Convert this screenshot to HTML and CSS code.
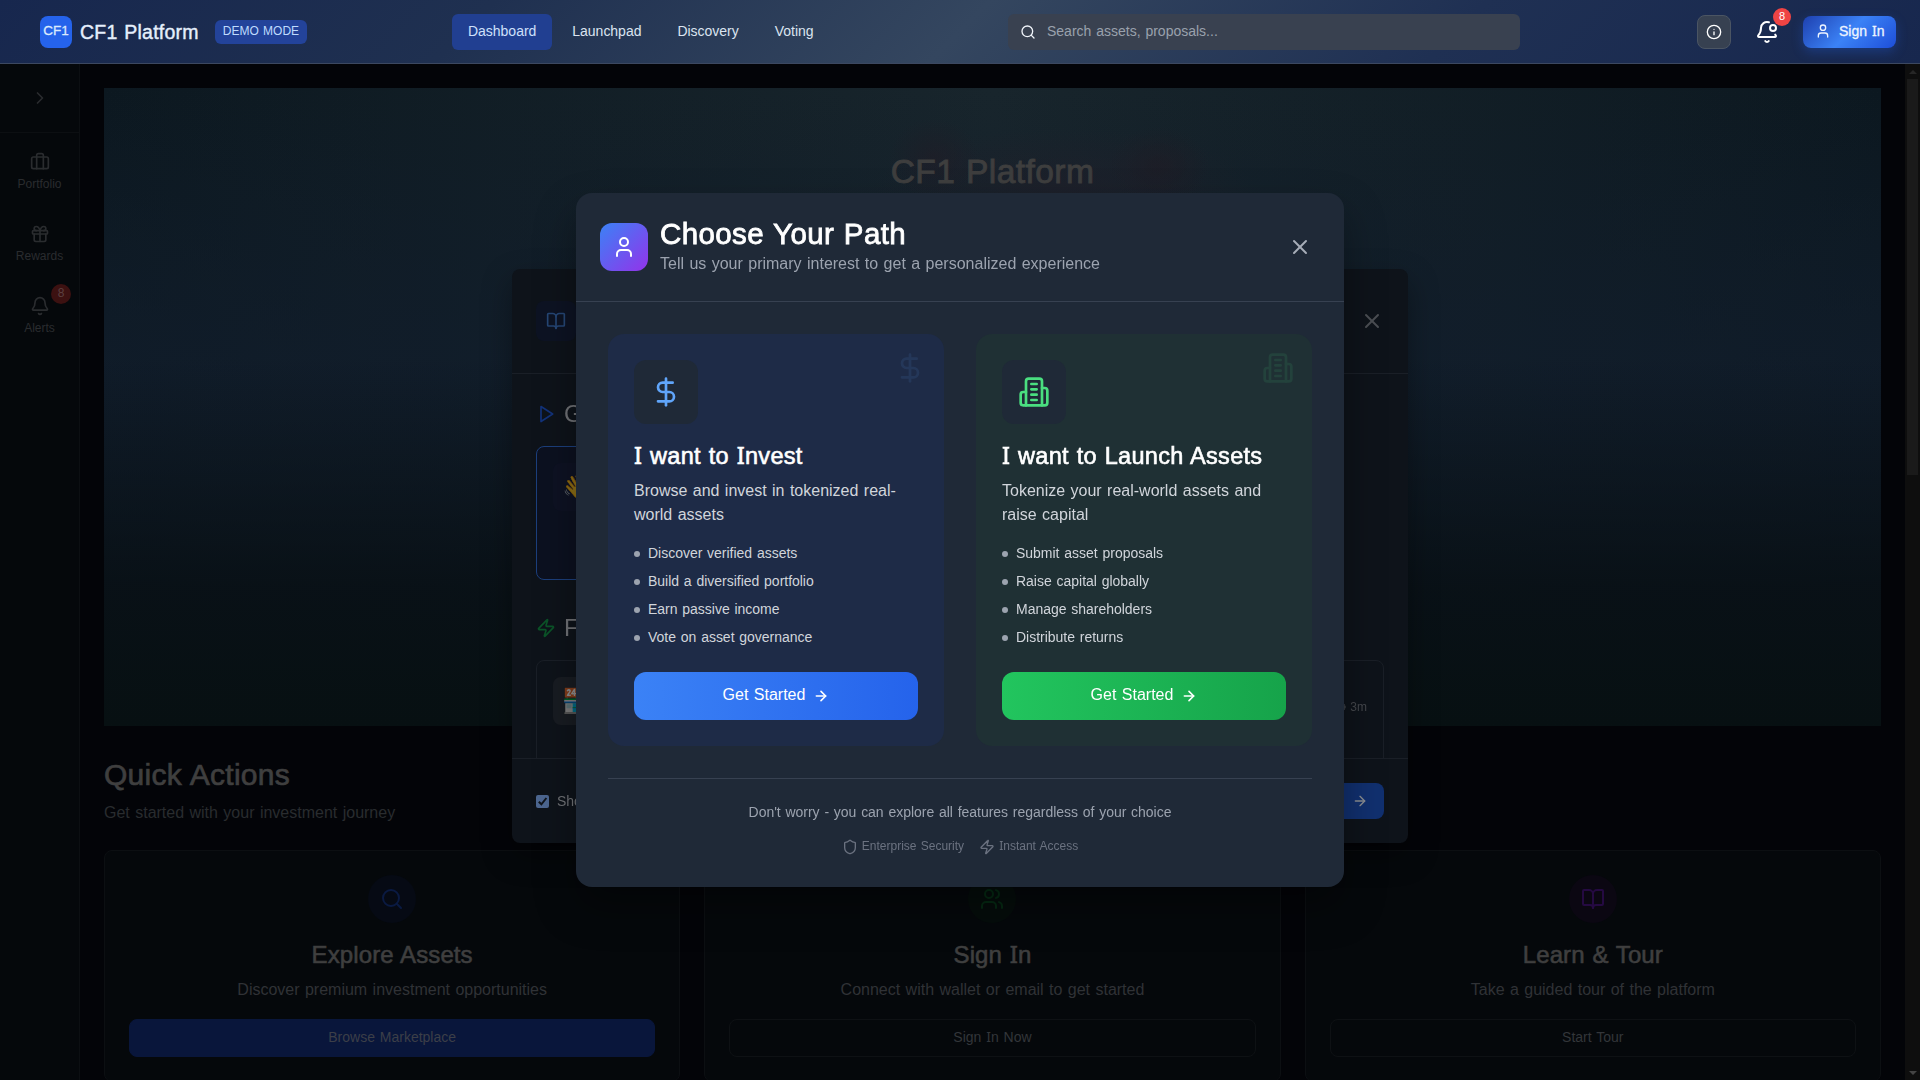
FILE: index.html
```html
<!DOCTYPE html>
<html lang="en">
<head>
<meta charset="utf-8">
<title>CF1 Platform</title>
<link rel="stylesheet" href="styles.css">
</head>
<body>
<svg class="defs" aria-hidden="true">
  <symbol id="search" viewBox="0 0 24 24"><circle cx="11" cy="11" r="8"/><path d="m21 21-4.3-4.3"/></symbol>
  <symbol id="info" viewBox="0 0 24 24"><circle cx="12" cy="12" r="10"/><path d="M12 16v-4"/><path d="M12 8h.01"/></symbol>
  <symbol id="bell-dot" viewBox="0 0 24 24"><path d="M10.268 21a2 2 0 0 0 3.464 0"/><path d="M13.916 2.314A6 6 0 0 0 6 8c0 4.499-1.411 5.956-2.74 7.327A1 1 0 0 0 4 17h16a1 1 0 0 0 .74-1.673 9 9 0 0 1-.585-.665"/><circle cx="18" cy="8" r="3"/></symbol>
  <symbol id="user" viewBox="0 0 24 24"><path d="M19 21v-2a4 4 0 0 0-4-4H9a4 4 0 0 0-4 4v2"/><circle cx="12" cy="7" r="4"/></symbol>
  <symbol id="users" viewBox="0 0 24 24"><path d="M16 21v-2a4 4 0 0 0-4-4H6a4 4 0 0 0-4 4v2"/><circle cx="9" cy="7" r="4"/><path d="M22 21v-2a4 4 0 0 0-3-3.87"/><path d="M16 3.13a4 4 0 0 1 0 7.75"/></symbol>
  <symbol id="chevron" viewBox="0 0 24 24"><path d="m9 18 6-6-6-6"/></symbol>
  <symbol id="luggage" viewBox="0 0 24 24"><path d="M16 20V4a2 2 0 0 0-2-2h-4a2 2 0 0 0-2 2v16"/><rect x="2" y="6" width="20" height="14" rx="2"/></symbol>
  <symbol id="gift" viewBox="0 0 24 24"><rect x="3" y="8" width="18" height="4" rx="1"/><path d="M12 8v13"/><path d="M19 12v7a2 2 0 0 1-2 2H7a2 2 0 0 1-2-2v-7"/><path d="M7.5 8a2.5 2.5 0 0 1 0-5A4.8 8 0 0 1 12 8a4.8 8 0 0 1 4.500-5 2.5 2.5 0 0 1 0 5"/></symbol>
  <symbol id="bell" viewBox="0 0 24 24"><path d="M10.268 21a2 2 0 0 0 3.464 0"/><path d="M3.262 15.326A1 1 0 0 0 4 17h16a1 1 0 0 0 .74-1.673C19.410 13.956 18 12.499 18 8A6 6 0 0 0 6 8c0 4.499-1.411 5.956-2.738 7.326"/></symbol>
  <symbol id="book" viewBox="0 0 24 24"><path d="M12 7v14"/><path d="M3 18a1 1 0 0 1-1-1V4a1 1 0 0 1 1-1h5a4 4 0 0 1 4 4 4 4 0 0 1 4-4h5a1 1 0 0 1 1 1v13a1 1 0 0 1-1 1h-6a3 3 0 0 0-3 3 3 3 0 0 0-3-3z"/></symbol>
  <symbol id="close" viewBox="0 0 24 24"><path d="M18 6 6 18"/><path d="m6 6 12 12"/></symbol>
  <symbol id="play" viewBox="0 0 24 24"><path d="m6 3 14 9-14 9z"/></symbol>
  <symbol id="zap" viewBox="0 0 24 24"><path d="M4 14a1 1 0 0 1-.78-1.630l9.900-10.200a.5.5 0 0 1 .86.460l-1.920 6.020A1 1 0 0 0 13 10h7a1 1 0 0 1 .780 1.630l-9.900 10.200a.5.5 0 0 1-.860-.460l1.920-6.020A1 1 0 0 0 11 14z"/></symbol>
  <symbol id="dollar" viewBox="0 0 24 24"><path d="M12 2v20"/><path d="M17 5H9.500a3.500 3.500 0 0 0 0 7h5a3.500 3.500 0 0 1 0 7H6"/></symbol>
  <symbol id="building" viewBox="0 0 24 24"><path d="M6 22V4a2 2 0 0 1 2-2h8a2 2 0 0 1 2 2v18Z"/><path d="M6 12H4a2 2 0 0 0-2 2v6a2 2 0 0 0 2 2h2"/><path d="M18 9h2a2 2 0 0 1 2 2v9a2 2 0 0 1-2 2h-2"/><path d="M10 6h4M10 10h4M10 14h4M10 18h4"/></symbol>
  <symbol id="arrow" viewBox="0 0 24 24"><path d="M5 12h14"/><path d="m12 5 7 7-7 7"/></symbol>
  <symbol id="shield" viewBox="0 0 24 24"><path d="M20 13c0 5-3.500 7.500-7.660 8.950a1 1 0 0 1-.670-.010C7.500 20.500 4 18 4 13V6a1 1 0 0 1 1-1c2 0 4.500-1.200 6.240-2.720a1.170 1.170 0 0 1 1.520 0C14.510 3.810 17 5 19 5a1 1 0 0 1 1 1z"/></symbol>
  <symbol id="clock" viewBox="0 0 24 24"><circle cx="12" cy="12" r="10"/><path d="M12 6v6l4 2"/></symbol>
</svg>

<header class="topbar">
  <div class="brand">
    <span class="logo">CF1</span>
    <span class="brand-name">CF1 Platform</span>
    <span class="demo">DEMO MODE</span>
  </div>
  <nav class="nav">
    <a class="active">Dashboard</a><a>Launchpad</a><a>Discovery</a><a>Voting</a>
  </nav>
  <div class="search"><svg class="icon s16"><use href="#search"/></svg><span>Search assets, proposals...</span></div>
  <div class="tools">
    <span class="info-btn"><svg class="icon s16"><use href="#info"/></svg></span>
    <span class="bell-btn"><svg class="icon s24"><use href="#bell-dot"/></svg><b class="count">8</b></span>
    <span class="signin"><svg class="icon s16"><use href="#user"/></svg><span>Sign <span class="cap-i">I</span>n</span></span>
  </div>
</header>

<div class="shell">
  <aside class="sidebar">
    <div class="toggle"><svg class="icon s20"><use href="#chevron"/></svg></div>
    <div class="side-items">
      <div class="side-item"><svg class="icon s20"><use href="#luggage"/></svg><span>Portfolio</span></div>
      <div class="side-item"><svg class="icon s20"><use href="#gift"/></svg><span>Rewards</span></div>
      <div class="side-item"><svg class="icon s20"><use href="#bell"/></svg><span>Alerts</span><b class="side-count">8</b></div>
    </div>
  </aside>
  <main class="main">
    <section class="hero"><h1>CF1 Platform</h1></section>
    <section class="quick">
      <h2>Quick Actions</h2>
      <p class="lead">Get started with your investment journey</p>
      <div class="actions">
        <article class="action blue"><span class="disc"><svg class="icon s24"><use href="#search"/></svg></span><h3>Explore Assets</h3><p>Discover premium investment opportunities</p><a class="primary">Browse Marketplace</a></article>
        <article class="action green"><span class="disc"><svg class="icon s24"><use href="#users"/></svg></span><h3>Sign <span class="cap-i">I</span>n</h3><p>Connect with wallet or email to get started</p><a>Sign <span class="cap-i">I</span>n Now</a></article>
        <article class="action purple"><span class="disc"><svg class="icon s24"><use href="#book"/></svg></span><h3>Learn &amp; Tour</h3><p>Take a guided tour of the platform</p><a>Start Tour</a></article>
      </div>
    </section>
  </main>
  <div class="scrollbar"><i class="up"></i><i class="thumb"></i><i class="down"></i></div>
</div>

<div class="layer tour-layer">
  <div class="tour">
    <div class="tour-head"><span class="tour-icon"><svg class="icon s20"><use href="#book"/></svg></span><svg class="icon s24"><use href="#close"/></svg></div>
    <div class="tour-body">
      <h3 class="t-blue"><svg class="icon s20"><use href="#play"/></svg>Getting Started</h3>
      <div class="tour-row first">
        <div class="tour-card chosen"><span class="emoji">👋</span></div>
      </div>
      <h3 class="t-green"><svg class="icon s20"><use href="#zap"/></svg>Features</h3>
      <div class="tour-row">
        <div class="tour-card"><span class="emoji">🏪</span></div>
        <div class="tour-card"><span class="time"><svg class="icon s12"><use href="#clock"/></svg>3m</span></div>
      </div>
    </div>
    <div class="tour-foot"><label><span class="check"><svg viewBox="0 0 13 13"><path d="M2.800 6.700 5.400 9.300 10.400 3"/></svg></span>Show on startup</label><span class="tour-next">Next<svg class="icon s16"><use href="#arrow"/></svg></span></div>
  </div>
</div>

<div class="layer">
  <div class="modal">
    <div class="modal-head">
      <span class="avatar"><svg class="icon s24"><use href="#user"/></svg></span>
      <div class="headings"><h2>Choose Your Path</h2><p>Tell us your primary interest to get a personalized experience</p></div>
      <svg class="icon s24 x"><use href="#close"/></svg>
    </div>
    <div class="modal-body">
      <div class="paths">
        <article class="path invest">
          <svg class="icon s32 ghost"><use href="#dollar"/></svg>
          <span class="tile"><svg class="icon s32"><use href="#dollar"/></svg></span>
          <h3><span class="cap-i">I</span> want to <span class="cap-i">I</span>nvest</h3>
          <p>Browse and invest in tokenized real-world assets</p>
          <ul><li>Discover verified assets</li><li>Build a diversified portfolio</li><li>Earn passive income</li><li>Vote on asset governance</li></ul>
          <a class="go"><span>Get Started</span><svg class="icon s16"><use href="#arrow"/></svg></a>
        </article>
        <article class="path launch">
          <svg class="icon s32 ghost"><use href="#building"/></svg>
          <span class="tile"><svg class="icon s32"><use href="#building"/></svg></span>
          <h3><span class="cap-i">I</span> want to Launch Assets</h3>
          <p>Tokenize your real-world assets and raise capital</p>
          <ul><li>Submit asset proposals</li><li>Raise capital globally</li><li>Manage shareholders</li><li>Distribute returns</li></ul>
          <a class="go"><span>Get Started</span><svg class="icon s16"><use href="#arrow"/></svg></a>
        </article>
      </div>
      <div class="modal-foot">
        <p>Don't worry - you can explore all features regardless of your choice</p>
        <div class="perks"><span><svg class="icon s16"><use href="#shield"/></svg><span>Enterprise Security</span></span><span><svg class="icon s16"><use href="#zap"/></svg><span><span class="cap-i">I</span>nstant Access</span></span></div>
      </div>
    </div>
  </div>
</div>
</body>
</html>
```
FILE: styles.css
```css
* { box-sizing: border-box; margin: 0; padding: 0; }
html, body { width: 1920px; height: 1080px; overflow: hidden; }
body { background: #030408; font-family: "Liberation Sans", Arial, sans-serif; font-size: 16px; line-height: 24px; word-spacing: .06em; color: #fff; }
h1, h2, h3, b { font-weight: 400; }
ul { list-style: none; }
.defs { display: none; }
.icon { fill: none; stroke: currentColor; stroke-width: 2; stroke-linecap: round; stroke-linejoin: round; flex: none; display: block; }
.s12 { width: 12px; height: 12px; }
.s16 { width: 16px; height: 16px; }
.s20 { width: 20px; height: 20px; }
.s24 { width: 24px; height: 24px; }
.s32 { width: 32px; height: 32px; }
.cap-i { font-family: "Noto Sans", sans-serif; line-height: 0; }

/* top bar */
.topbar { position: relative; z-index: 10; height: 64px; padding: 0 24px 0 40px; display: flex; align-items: center; border-bottom: 1px solid #3c4860; background: linear-gradient(135deg, #17274e 0%, #1f3050 25%, #34465f 50%, #1f3053 75%, #17274e 100%); font-size: 14px; line-height: 20px; }
.brand { display: flex; align-items: center; width: 412px; }
.logo { width: 32px; height: 32px; border-radius: 8px; background: #2563eb; color: #dbeafe; display: flex; align-items: center; justify-content: center; padding-bottom: 2px; font-size: 13.5px; -webkit-text-stroke: .3px; }
.brand-name { margin-left: 8px; font-size: 19.5px; letter-spacing: .25px; line-height: 28px; color: #e5effc; -webkit-text-stroke: .4px; }
.demo { margin-left: 16px; height: 24px; padding: 3px 8px 5px; border-radius: 6px; background: #23439a; color: #bfdbfe; font-size: 12px; line-height: 16px; }
.nav { display: flex; gap: 4px; width: 556px; }
.nav a { height: 36px; padding: 7px 16px 9px; border-radius: 6px; color: #dbe4f0; letter-spacing: -.02px; }
.nav .active { background: #213f91; color: #cfe0fb; }
.search { width: 512px; height: 36px; border-radius: 6px; background: #394150; padding: 0 12px; display: flex; align-items: center; gap: 11px; color: #9aa1ad; }
.search .icon { color: #f0f4fa; }
.search > span { padding-bottom: 1px; }
.tools { margin-left: auto; display: flex; align-items: center; }
.info-btn { width: 34px; height: 34px; border: 1px solid #4b5563; border-radius: 8px; background: #374151; display: flex; align-items: center; justify-content: center; }
.bell-btn { position: relative; margin: 0 24px; }
.count { position: absolute; left: 18px; top: -12px; width: 18px; height: 18px; border-radius: 9px; background: #ef4444; font-size: 11px; line-height: 16px; text-align: center; }
.signin { width: 93px; height: 32px; border-radius: 8px; display: flex; align-items: center; gap: 8px; padding: 0 12px 1px; background: linear-gradient(135deg, #1e40af, #3b82f6 50%, #1d4ed8); box-shadow: 0 4px 12px rgba(37, 99, 235, .3); white-space: nowrap; color: #edf4ff; -webkit-text-stroke: .3px; }

/* page shell */
.shell { display: flex; height: 1016px; }
.sidebar { width: 80px; border-right: 1px solid #0c0f12; background: #05080b; color: #2a2c2f; flex: none; }
.toggle { height: 69px; border-bottom: 1px solid #0c0f12; display: flex; align-items: center; justify-content: center; }
.side-items { padding-top: 19px; display: flex; flex-direction: column; gap: 24px; font-size: 12px; line-height: 16px; }
.side-item { position: relative; height: 48px; display: flex; flex-direction: column; align-items: center; gap: 4px; }
.side-count { position: absolute; left: 51px; top: -12px; width: 20px; height: 20px; border-radius: 10px; background: #3c1111; color: #5b4040; text-align: center; line-height: 18px; }
.main { width: 1825px; padding: 24px; overflow: hidden; flex: none; }
.hero { height: 638px; padding-top: 62px; text-align: center; background:
  radial-gradient(ellipse 50px 40px at 1055px 78px, rgba(32, 27, 36, .55), rgba(32, 27, 36, 0)),
  radial-gradient(ellipse 45px 40px at 830px 70px, rgba(32, 28, 38, .6), rgba(32, 28, 38, 0)),
  radial-gradient(ellipse 190px 60px at 960px 100px, rgba(32, 31, 42, .7), rgba(32, 31, 42, 0)),
  linear-gradient(180deg, rgba(7, 14, 18, 0) 42%, rgba(7, 14, 18, .8) 78%, #071012 100%),
  linear-gradient(180deg, rgba(17, 29, 44, 0), rgba(17, 29, 44, .75) 45%),
  linear-gradient(90deg, #0c1820, #18252c 50%, #0c1820); }
.hero h1 { font-size: 33.5px; letter-spacing: .45px; line-height: 44px; color: #3e3e3e; -webkit-text-stroke: .9px; }
.quick h2 { margin-top: 31px; font-size: 30px; letter-spacing: .25px; line-height: 36px; color: #3f3f3f; -webkit-text-stroke: .7px; }
.lead { margin-top: 8px; color: #292c2f; line-height: 24px; }
.actions { margin-top: 25px; display: grid; grid-template-columns: repeat(3, 1fr); gap: 24px; }
.action { border: 1px solid #0c0f12; border-radius: 8px; background: #05080b; padding: 24px; height: 232px; display: flex; flex-direction: column; align-items: center; }
.disc { width: 48px; height: 48px; border-radius: 24px; display: flex; align-items: center; justify-content: center; }
.blue .disc { background: #060a14; color: #0a1a42; }
.green .disc { background: #050d0b; color: #052a13; }
.purple .disc { background: #0b0712; color: #250a42; }
.action h3 { margin-top: 16px; font-size: 24px; letter-spacing: .1px; line-height: 32px; color: #3f3f3f; -webkit-text-stroke: .6px; }
.action p { margin-top: 7px; color: #303236; }
.action a { margin-top: 17px; align-self: stretch; height: 38px; border: 1px solid #0e1114; border-radius: 8px; padding-top: 7px; text-align: center; font-size: 14px; line-height: 20px; color: #33363a; }
.action .primary { background: #09163b; border-color: #09163b; color: #3c3f48; }
.scrollbar { width: 15px; background: #0e0e0e; display: flex; flex-direction: column; align-items: center; padding: 6px 0 5px; flex: none; }
.up { border: 4px solid transparent; border-top: 0; border-bottom: 4px solid #262626; }
.thumb { margin-top: 5px; width: 11px; height: 396px; background: #1a1a1a; }
.down { margin-top: auto; border: 4px solid transparent; border-bottom: 0; border-top: 4px solid #444; }

/* overlays */
.layer { position: fixed; inset: 0; display: flex; align-items: center; justify-content: center; }
.tour-layer { padding-top: 32px; }
.tour { width: 896px; height: 574px; border-radius: 8px; background: #0e131a; display: flex; flex-direction: column; box-shadow: 0 12px 30px rgba(0, 0, 0, .35); color: #707276; }
.tour-head { height: 105px; padding: 0 24px; display: flex; align-items: center; justify-content: space-between; border-bottom: 1px solid #1a1f27; color: #4b4e53; }
.tour-icon { width: 40px; height: 40px; border-radius: 8px; background: #0d1323; color: #254675; display: flex; align-items: center; justify-content: center; }
.tour-body { flex: 1; overflow: hidden; padding: 24px 24px 0; }
.tour-body h3 { height: 32px; display: flex; align-items: center; gap: 8px; font-size: 24px; line-height: 32px; }
.t-blue .icon { color: #12327a; }
.t-green .icon { color: #0b5428; }
.tour-row { margin-top: 16px; display: grid; grid-template-columns: 1fr 1fr; gap: 16px; }
.first { margin-bottom: 32px; }
.tour-card { display: flex; border: 1px solid #1a1f27; border-radius: 8px; height: 134px; padding: 16px; }
.chosen { border-color: #1c3f7c; background: #0c1120; }
.emoji { width: 48px; height: 48px; border-radius: 8px; background: #2c323d; display: flex; align-items: center; justify-content: center; font-family: "Noto Color Emoji", sans-serif; font-size: 24px; filter: brightness(.55); }
.chosen .emoji { background: #1a2040; }
.time { margin-left: auto; display: flex; align-items: center; gap: 4px; font-size: 12px; line-height: 16px; height: 60px; color: #45484d; }
.tour-foot { height: 85px; padding: 0 24px; border-top: 1px solid #1a1f27; display: flex; align-items: center; justify-content: space-between; font-size: 14px; line-height: 20px; }
.tour-foot label { display: flex; align-items: center; gap: 8px; }
.check { width: 13px; height: 13px; border-radius: 2px; background: #4c6690; }
.check svg { display: block; width: 13px; height: 13px; fill: none; stroke: #10151c; stroke-width: 2; }
.tour-next { height: 36px; padding: 0 16px; border-radius: 8px; background: #11306f; display: flex; align-items: center; gap: 8px; color: #8c8e92; }

.modal { width: 768px; height: 694px; border-radius: 16px; background: #1f2937; box-shadow: 0 20px 40px rgba(0, 0, 0, .35); }
.modal-head { height: 109px; padding: 0 32px 0 24px; display: flex; align-items: center; border-bottom: 1px solid #374151; }
.avatar { width: 48px; height: 48px; border-radius: 12px; background: linear-gradient(135deg, #3b82f6, #9333ea); display: flex; align-items: center; justify-content: center; }
.headings { margin-left: 12px; flex: 1; padding-bottom: 2px; }
.headings h2 { font-size: 29.5px; letter-spacing: .4px; line-height: 36px; -webkit-text-stroke: .8px; }
.headings p { color: #9ca3af; }
.x { color: #a7adb8; }
.modal-body { padding: 32px; }
.paths { display: grid; grid-template-columns: 1fr 1fr; gap: 32px; }
.path { position: relative; height: 412px; border-radius: 16px; padding: 26px; }
.invest { background: #1e2b47; color: #60a5fa; }
.launch { background: #1f3034; color: #4ade80; }
.ghost { position: absolute; top: 18px; right: 18px; opacity: .1; }
.tile { width: 64px; height: 64px; border-radius: 12px; background: #1f2937; display: flex; align-items: center; justify-content: center; }
.path h3 { margin-top: 16px; font-size: 23.5px; letter-spacing: .3px; line-height: 32px; color: #fff; -webkit-text-stroke: .6px; white-space: nowrap; }
.path p { margin-top: 7px; color: #d1d5db; }
.path ul { margin-top: 16px; display: grid; gap: 8px; font-size: 14px; line-height: 20px; color: #d1d5db; }
.path li { display: flex; align-items: center; gap: 8px; letter-spacing: -.02px; }
.path li::before { content: ""; width: 6px; height: 6px; border-radius: 3px; background: #9ca3af; margin-top: 2px; }
.go { margin-top: 25px; height: 48px; border-radius: 12px; display: flex; align-items: center; justify-content: center; gap: 8px; color: #fff; }
.go > span { padding-bottom: 2px; }
.go .icon { stroke-width: 2.4; }
.invest .go { background: linear-gradient(90deg, #3b82f6, #2563eb); }
.launch .go { background: linear-gradient(90deg, #22c55e, #16a34a); }
.modal-foot { margin-top: 32px; border-top: 1px solid #374151; padding-top: 23px; text-align: center; font-size: 14px; line-height: 20px; color: #9ca3af; }
.modal-foot > p { letter-spacing: -.03px; }
.perks { margin-top: 17px; display: flex; justify-content: center; gap: 15px; font-size: 12px; line-height: 16px; color: #6b7280; }
.perks > span { display: flex; align-items: center; gap: 4px; }
.perks > span > span { padding-bottom: 2px; line-height: 14px; }
```
